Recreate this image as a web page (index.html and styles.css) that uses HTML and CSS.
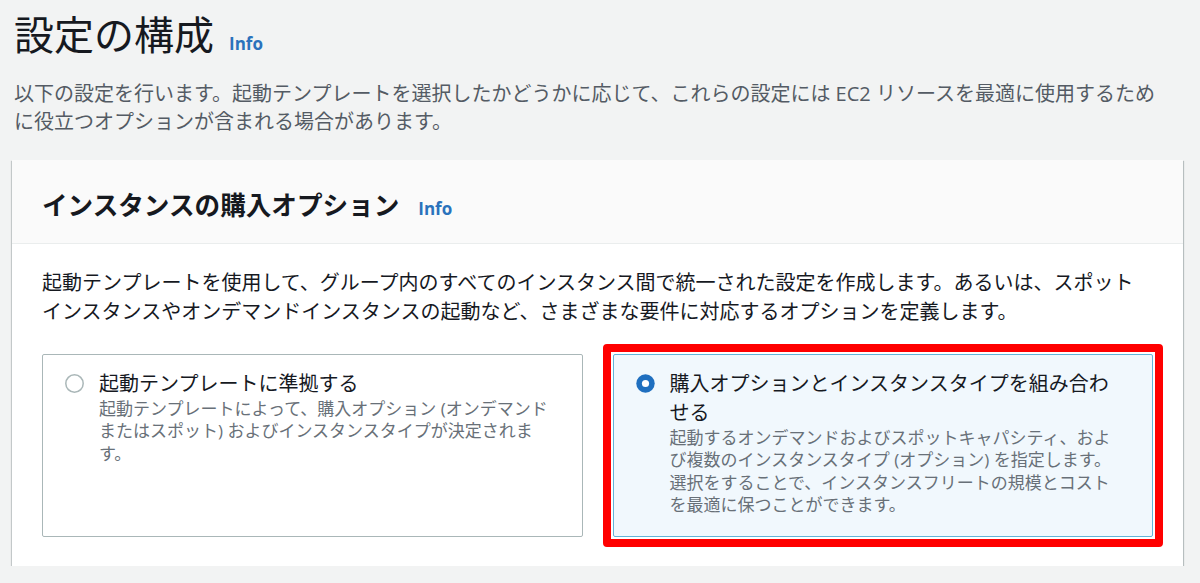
FILE: index.html
```html
<!DOCTYPE html>
<html lang="ja">
<head>
<meta charset="utf-8">
<title>設定の構成</title>
<link rel="stylesheet" href="styles.css">
</head>
<body>
<main class="page">
  <div class="page-header">
    <h1 class="page-title">設定の構成</h1>
    <a class="info-link info-link--lg" href="#">Info</a>
  </div>
  <p class="intro">以下の設定を行います。起動テンプレートを選択したかどうかに応じて、これらの設定には EC2 リソースを最適に使用するために役立つオプションが含まれる場合があります。</p>

  <section class="card">
    <header class="card-header">
      <h2 class="card-title">インスタンスの購入オプション</h2>
      <a class="info-link" href="#">Info</a>
    </header>
    <div class="card-body">
      <p class="card-text">起動テンプレートを使用して、グループ内のすべてのインスタンス間で統一された設定を作成します。あるいは、スポットインスタンスやオンデマンドインスタンスの起動など、さまざまな要件に対応するオプションを定義します。</p>
      <div class="tiles">
        <label class="tile">
          <span class="radio-wrap">
            <svg class="radio" width="19" height="19" viewBox="0 0 19 19"><circle cx="9.5" cy="9.5" r="8.7" fill="#fff" stroke="#aab7b8" stroke-width="1.5"/></svg>
          </span>
          <span class="tile-text">
            <span class="tile-label">起動テンプレートに準拠する</span>
            <span class="tile-desc">起動テンプレートによって、購入オプション (オンデマンドまたはスポット) およびインスタンスタイプが決定されま<br>す。</span>
          </span>
        </label>
        <label class="tile tile--selected">
          <span class="radio-wrap">
            <svg class="radio" width="19" height="19" viewBox="0 0 19 19"><circle cx="9.5" cy="9.5" r="9.2" fill="#1f6fbf"/><circle cx="9.5" cy="9.5" r="3.6" fill="#fff"/></svg>
          </span>
          <span class="tile-text">
            <span class="tile-label">購入オプションとインスタンスタイプを組み合わせる</span>
            <span class="tile-desc">起動するオンデマンドおよびスポットキャパシティ、および複数のインスタンスタイプ (オプション) を指定します。選択をすることで、インスタンスフリートの規模とコストを最適に保つことができます。</span>
          </span>
        </label>
      </div>
    </div>
  </section>
</main>
</body>
</html>
```

FILE: styles.css
```css
* {
  box-sizing: border-box;
}

html, body {
  margin: 0;
  padding: 0;
  background: #f2f3f3;
}

body {
  font-family: "Open Sans", "Noto Sans CJK JP", sans-serif;
  color: #16191f;
}

.page {
  padding: 9px 17px 0 12px;
}

.page-header {
  display: flex;
  align-items: baseline;
  padding-left: 2px;
}

.page-title {
  margin: 0;
  font-family: "Noto Sans CJK JP", sans-serif;
  font-size: 40px;
  line-height: 48px;
  font-weight: 400;
  color: #16191f;
}

.info-link {
  margin-left: 17px;
  font-family: "Open Sans", sans-serif;
  font-size: 16px;
  font-weight: 700;
  color: #2a72bc;
  text-decoration: none;
}

.info-link--lg {
  font-size: 17px;
  margin-left: 15px;
}

.intro {
  margin: 23px 0 0 2px;
  max-width: 1156px;
  font-size: 20px;
  line-height: 28px;
  color: #545b64;
}

.card {
  margin-top: 24px;
  background: #fff;
  box-shadow: 0 1px 1px 0 rgba(0, 28, 36, 0.3), 1px 1px 1px 0 rgba(0, 28, 36, 0.2), -1px 1px 1px 0 rgba(0, 28, 36, 0.15);
}

.card-header {
  display: flex;
  align-items: baseline;
  padding: 26px 30px 22px;
  background: #fafafa;
  border-bottom: 1px solid #eaeded;
}

.card-title {
  margin: 0;
  font-family: "Noto Sans CJK JP", sans-serif;
  font-size: 25.6px;
  line-height: 35px;
  font-weight: 700;
  color: #16191f;
}

.card-header .info-link {
  font-size: 17px;
  margin-left: 19px;
}

.card-body {
  padding: 24px 30px 29px;
}

.card-text {
  margin: 0;
  font-size: 20px;
  line-height: 29px;
  color: #16191f;
}

.tiles {
  margin-top: 28px;
  display: grid;
  grid-template-columns: 1fr 1fr;
  column-gap: 30px;
}

.tile {
  position: relative;
  display: flex;
  gap: 15px;
  padding: 14px 30px 20px 22px;
  border: 1px solid #aab7b8;
  border-radius: 2px;
  background: #fff;
  cursor: pointer;
}

.tile--selected {
  border-color: #62b4d8;
  background: #f1f8fd;
}

.tile--selected::after {
  content: "";
  position: absolute;
  top: -11px;
  left: -11px;
  right: -11px;
  bottom: -11px;
  border: 8px solid #ff0000;
  border-radius: 4px;
  pointer-events: none;
}

.radio-wrap {
  flex: none;
  display: flex;
  align-items: center;
  height: 29px;
}

.radio {
  display: block;
}

.tile-text {
  display: flex;
  flex-direction: column;
  min-width: 0;
}

.tile-label {
  font-size: 20px;
  line-height: 29px;
  color: #16191f;
}

.tile-desc {
  font-size: 17px;
  line-height: 22.3px;
  color: #687078;
}
```
